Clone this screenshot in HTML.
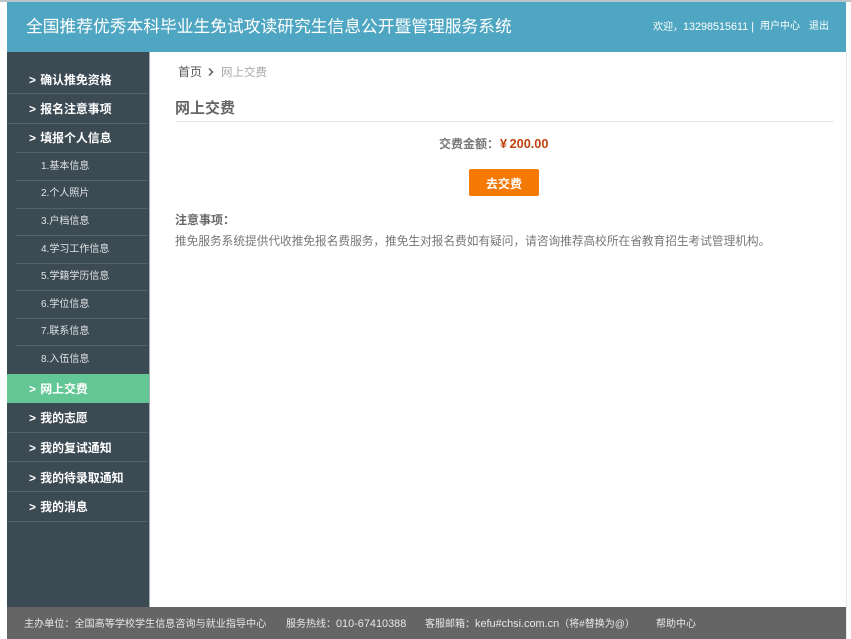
<!DOCTYPE html>
<html lang="zh-CN">
<head>
<meta charset="utf-8">
<title>网上交费</title>
<style>
html,body{margin:0;padding:0;background:#fff;}
body{width:851px;height:639px;position:relative;overflow:hidden;font-family:"Liberation Sans","Noto Sans CJK SC",sans-serif;color:#666;}
div{position:absolute;white-space:nowrap;}
.top{left:0;top:0;width:851px;height:2px;background:#b9c6ca;}
.hdr{left:7px;top:2px;width:839px;height:50px;background:#4fa6c2;}
.title{left:26px;top:16px;font-size:16.75px;line-height:22px;color:#fff;}
.user{top:19px;font-size:10px;line-height:16px;color:#fff;}
.user b{font-weight:normal;font-size:10.8px;}
.side{left:7px;top:52px;width:142px;height:555px;background:#3c4a54;}
.edge{left:149px;top:52px;width:1px;height:555px;background:#a9b0b4;}
.rline{left:846px;top:52px;width:1px;height:587px;background:#e4e6e8;}
.m{left:29px;font-size:11.9px;line-height:16px;font-weight:bold;color:#fff;word-spacing:1px;}
.s{left:41px;font-size:10px;line-height:14px;color:#dfe3e5;}
.l{left:7px;width:141px;height:1px;background:#53616b;}
.ls{left:16px;width:132px;height:1px;background:#53616b;}
.act{left:7px;top:374px;width:142px;height:29px;background:#63c795;}
.foot{left:7px;top:607px;width:839px;height:32px;background:#666566;}
.f{top:617px;font-size:10px;line-height:15px;color:#e8e8e8;}
.f b{font-weight:normal;font-size:10.9px;}
</style>
</head>
<body>
<div class="top"></div>
<div class="hdr"></div>
<div class="title">全国推荐优秀本科毕业生免试攻读研究生信息公开暨管理服务系统</div>
<div class="user" style="left:653px">欢迎，<b>13298515611 |</b></div>
<div class="user" style="left:760px">用户中心</div>
<div class="user" style="left:809px">退出</div>

<div class="side"></div>
<div class="edge"></div>
<div class="rline"></div>

<div class="m" style="top:72px">&gt; 确认推免资格</div>
<div class="l" style="top:93px"></div>
<div class="m" style="top:101px">&gt; 报名注意事项</div>
<div class="l" style="top:123px"></div>
<div class="m" style="top:130px">&gt; 填报个人信息</div>
<div class="ls" style="top:152px"></div>
<div class="s" style="top:160px">1.基本信息</div>
<div class="ls" style="top:180px"></div>
<div class="s" style="top:187px">2.个人照片</div>
<div class="ls" style="top:208px"></div>
<div class="s" style="top:215px">3.户档信息</div>
<div class="ls" style="top:235px"></div>
<div class="s" style="top:243px">4.学习工作信息</div>
<div class="ls" style="top:263px"></div>
<div class="s" style="top:270px">5.学籍学历信息</div>
<div class="ls" style="top:290px"></div>
<div class="s" style="top:298px">6.学位信息</div>
<div class="ls" style="top:318px"></div>
<div class="s" style="top:325px">7.联系信息</div>
<div class="ls" style="top:345px"></div>
<div class="s" style="top:353px">8.入伍信息</div>
<div class="act"></div>
<div class="m" style="top:381px">&gt; 网上交费</div>
<div class="m" style="top:410px">&gt; 我的志愿</div>
<div class="l" style="top:432px"></div>
<div class="m" style="top:440px">&gt; 我的复试通知</div>
<div class="l" style="top:461px"></div>
<div class="m" style="top:470px">&gt; 我的待录取通知</div>
<div class="l" style="top:491px"></div>
<div class="m" style="top:499px">&gt; 我的消息</div>
<div class="l" style="top:521px"></div>

<div style="left:178px;top:64px;font-size:12px;line-height:16px;color:#555;">首页</div>
<svg style="position:absolute;left:207px;top:67px" width="8" height="10" viewBox="0 0 8 10"><path d="M2 1.5 L5.5 5 L2 8.5" fill="none" stroke="#555" stroke-width="1.4"/></svg>
<div style="left:221px;top:65px;font-size:11.5px;line-height:16px;color:#aaa;">网上交费</div>
<div style="left:175px;top:99px;font-size:15px;line-height:20px;font-weight:bold;color:#666;">网上交费</div>
<div style="left:175px;top:121px;width:659px;height:1px;background:#e8e8e8;"></div>

<div style="left:439px;top:136px;font-size:12px;line-height:16px;font-weight:bold;color:#777;">交费金额：</div>
<div style="left:500px;top:136px;font-size:12.7px;line-height:17px;font-weight:bold;color:#c0410f;">¥&#8201;200.00</div>
<div style="left:469px;top:169px;width:70px;height:27px;background:#f57a05;border-radius:2px;"></div>
<div style="left:469px;top:176px;width:70px;text-align:center;font-size:12px;line-height:16px;font-weight:bold;color:#fff;">去交费</div>

<div style="left:175px;top:212px;font-size:12px;line-height:16px;font-weight:bold;color:#666;">注意事项：</div>
<div style="left:175px;top:234px;font-size:11.68px;line-height:16px;color:#777;">推免服务系统提供代收推免报名费服务，推免生对报名费如有疑问，请咨询推荐高校所在省教育招生考试管理机构。</div>

<div class="foot"></div>
<div class="f" style="left:24px;font-size:10.1px">主办单位：全国高等学校学生信息咨询与就业指导中心</div>
<div class="f" style="left:286px">服务热线：<b>010-67410388</b></div>
<div class="f" style="left:425px">客服邮箱：<b>kefu#chsi.com.cn</b>（将#替换为@）</div>
<div class="f" style="left:656px">帮助中心</div>
</body>
</html>
